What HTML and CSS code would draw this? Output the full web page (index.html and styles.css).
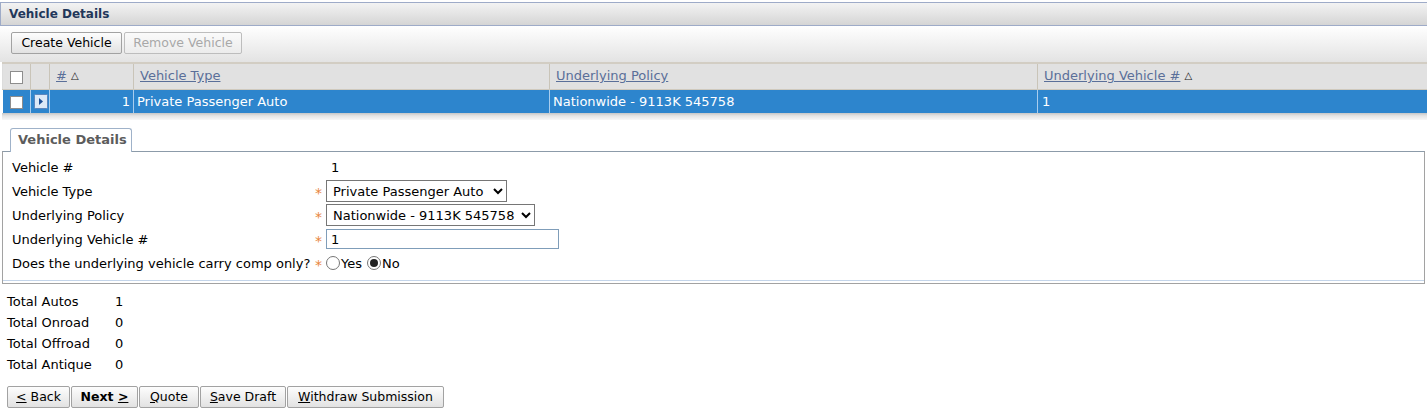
FILE: index.html
```html
<!DOCTYPE html>
<html>
<head>
<meta charset="utf-8">
<link rel="stylesheet" href="styles.css">
</head>
<body>
<div class="hdr">Vehicle Details</div>
<div class="toolbar">
  <button class="btn b-create">Create Vehicle</button>
  <button class="btn b-remove" disabled>Remove Vehicle</button>
</div>
<table class="grid">
  <colgroup>
    <col class="c-chk"><col class="c-exp"><col class="c-num"><col class="c-type"><col class="c-pol"><col>
  </colgroup>
  <thead>
    <tr>
      <th><span class="cb"></span></th>
      <th></th>
      <th><a class="hl">#</a><span class="sort">&#9651;</span></th>
      <th><a class="hl">Vehicle Type</a></th>
      <th><a class="hl">Underlying Policy</a></th>
      <th><a class="hl">Underlying Vehicle #</a><span class="sort">&#9651;</span></th>
    </tr>
  </thead>
  <tbody>
    <tr class="sel">
      <td><span class="cb"></span></td>
      <td class="exp"><svg width="14" height="15" viewBox="0 0 14 15"><rect x="0.5" y="0.5" width="13" height="14" rx="1" fill="#dce9f7" stroke="#5b85bd"/><path d="M5 4 L9 7.5 L5 11 Z" fill="#1d4f96"/></svg></td>
      <td class="num">1</td>
      <td>Private Passenger Auto</td>
      <td>Nationwide - 9113K 545758</td>
      <td>1</td>
    </tr>
  </tbody>
</table>
<div class="grid-foot"></div>

<div class="tabs"><div class="tab">Vehicle Details</div></div>
<div class="panel">
  <div class="frow"><div class="lbl">Vehicle #</div><div class="req"></div><div class="val ro">1</div></div>
  <div class="frow"><div class="lbl">Vehicle Type</div><div class="req">*</div><div class="val"><select class="sel1"><option>Private Passenger Auto</option></select></div></div>
  <div class="frow"><div class="lbl">Underlying Policy</div><div class="req">*</div><div class="val"><select class="sel2"><option>Nationwide - 9113K 545758</option></select></div></div>
  <div class="frow"><div class="lbl">Underlying Vehicle #</div><div class="req">*</div><div class="val"><input class="txt" type="text" value="1"></div></div>
  <div class="frow"><div class="lbl">Does the underlying vehicle carry comp only?</div><div class="req">*</div><div class="val radios"><span class="rad"></span><span>Yes</span><span class="rad on"></span><span>No</span></div></div>
</div>

<div class="totals">
  <div class="trow"><span class="tl">Total Autos</span><span>1</span></div>
  <div class="trow"><span class="tl">Total Onroad</span><span>0</span></div>
  <div class="trow"><span class="tl">Total Offroad</span><span>0</span></div>
  <div class="trow"><span class="tl">Total Antique</span><span>0</span></div>
</div>

<div class="actions">
  <button class="btn b-back"><u>&lt;</u> Back</button>
  <button class="btn b-next">Next <u>&gt;</u></button>
  <button class="btn b-quote"><u>Q</u>uote</button>
  <button class="btn b-save"><u>S</u>ave Draft</button>
  <button class="btn b-wd"><u>W</u>ithdraw Submission</button>
</div>
</body>
</html>
```
FILE: styles.css
```css
* { box-sizing: border-box; }
html, body { margin: 0; padding: 0; background: #fff; }
body {
  font-family: "DejaVu Sans", Verdana, sans-serif;
  font-size: 13px;
  color: #000;
  width: 1427px;
}

.hdr {
  margin-top: 2px;
  height: 24px;
  border-top: 1px solid #9eabc8;
  border-bottom: 1px solid #9eabc8;
  border-left: 1px solid #9eabc8;
  background: linear-gradient(#f3f3f3, #d5d5d5);
  color: #22375a;
  font-weight: bold;
  font-size: 12px;
  line-height: 22px;
  padding-left: 8px;
}

.toolbar {
  height: 36px;
  background: linear-gradient(#ffffff, #e3e3e3);
  padding: 6px 0 0 11px;
  display: flex;
  gap: 2px;
  align-items: flex-start;
}

.btn {
  font-family: "DejaVu Sans", Verdana, sans-serif;
  font-size: 12.5px;
  height: 22px;
  padding: 0;
  border: 1px solid #a2a2a2;
  border-radius: 2px;
  background: linear-gradient(#fdfdfd, #e2e2e2);
  color: #000;
  line-height: 20px;
  margin: 0;
  white-space: nowrap;
  text-align: center;
}
.btn:disabled { color: #a8a8a8; border-color: #bdbdbd; background: linear-gradient(#fafafa, #ececec); }
.btn u { text-decoration: underline; }
.b-create { width: 111px; }
.b-remove { width: 118px; }

.grid {
  margin-left: 2px;
  width: 1425px;
  border-collapse: collapse;
  table-layout: fixed;
  border-top: 2px solid #d2cdc3;
}
.c-chk { width: 28px; }
.c-exp { width: 19px; }
.c-num { width: 84px; }
.c-type { width: 416px; }
.c-pol { width: 488px; }

.grid th {
  height: 26px;
  background: #e1e1e1;
  border-right: 1px solid #c9c4b8;
  border-bottom: 1px solid #cfc9bd;
  text-align: left;
  font-weight: normal;
  padding: 0 0 1px 6px;
  white-space: nowrap;
}
.grid th:first-child { padding: 0; text-align: center; border-left: 1px solid #dcdcdc; }
.grid th:nth-child(2) { padding: 0; }
.grid th:last-child { border-right: none; }
.hl { color: #5a6f99; text-decoration: underline; }
.sort { font-size: 10px; color: #222; margin-left: 4px; position: relative; top: -1px; }

.grid td {
  height: 24px;
  background: #2d85cd;
  color: #fff;
  border-right: 1px solid #a9cdee;
  padding: 0 0 0 3px;
  white-space: nowrap;
}
.grid td:first-child { padding: 0; text-align: center; }
.grid td:last-child { border-right: none; padding-left: 4px; }
.grid td.exp { padding: 0 0 0 3px; }
.grid td.exp svg { display: block; }
.grid td.num { text-align: right; padding: 0 3px 0 0; }

.cb {
  display: inline-block;
  width: 13px;
  height: 13px;
  border: 1px solid #8d8d8d;
  background: #fff;
  vertical-align: middle;
}

.grid-foot {
  height: 7px;
  margin-left: 2px;
  background: linear-gradient(#c6c6c6, #e4e4e4 40%, #f8f8f8);
}

.tabs {
  margin-top: 8px;
  margin-left: 2px;
  margin-right: 2px;
  display: flex;
  align-items: flex-end;
  padding-left: 8px;
}
.tab {
  width: 122px;
  height: 24px;
  border: 1px solid #9fb2c9;
  border-bottom: none;
  border-radius: 3px 3px 0 0;
  background: #fff;
  color: #5c5c5c;
  font-weight: bold;
  line-height: 22px;
  padding-left: 7px;
  position: relative;
  z-index: 1;
  margin-bottom: -1px;
  white-space: nowrap;
}

.panel {
  margin-left: 2px;
  margin-right: 2px;
  border: 1px solid #a2a2a2;
  border-top-color: #8c9ba9;
  box-shadow: inset 0 -2px 0 #fff, inset 0 -3px 0 #c4d5ea;
  padding: 3px 0 8px 9px;
}
.frow {
  height: 24px;
  display: flex;
  align-items: center;
}
.lbl { width: 303px; white-space: nowrap; }
.req { width: 11px; color: #e8843c; font-size: 14px; padding-top: 4px; }
.val { display: flex; align-items: center; }
.val.ro { padding-left: 5px; }

select {
  font-family: "DejaVu Sans", Verdana, sans-serif;
  font-size: 13px;
  height: 22px;
  border: 1px solid #767676;
  border-radius: 0;
  background: #fff;
  color: #000;
  padding: 0 0 0 2px;
}
.sel1 { width: 181px; }
.sel2 { width: 209px; }

.txt {
  font-family: "DejaVu Sans", Verdana, sans-serif;
  font-size: 13px;
  width: 233px;
  height: 20px;
  border: 1px solid #7f9db9;
  padding: 0 4px;
  color: #000;
}

.radios span { display: inline-block; }
.rad {
  width: 14px;
  height: 14px;
  border: 1px solid #767676;
  border-radius: 50%;
  background: #fff;
  position: relative;
  margin-right: 1px;
}
.rad.on { margin-left: 5px; }
.rad.on::after {
  content: "";
  position: absolute;
  left: 2px; top: 2px;
  width: 8px; height: 8px;
  border-radius: 50%;
  background: #222;
}

.totals {
  margin-top: 7px;
  padding-left: 7px;
}
.trow { height: 21px; line-height: 21px; display: flex; }
.tl { width: 108px; }

.actions {
  margin-top: 11px;
  padding-left: 7px;
  display: flex;
  gap: 1px;
}
.b-back { width: 63px; }
.b-next { width: 67px; font-weight: bold; }
.b-quote { width: 60px; }
.b-save { width: 86px; }
.b-wd { width: 157px; }
```
